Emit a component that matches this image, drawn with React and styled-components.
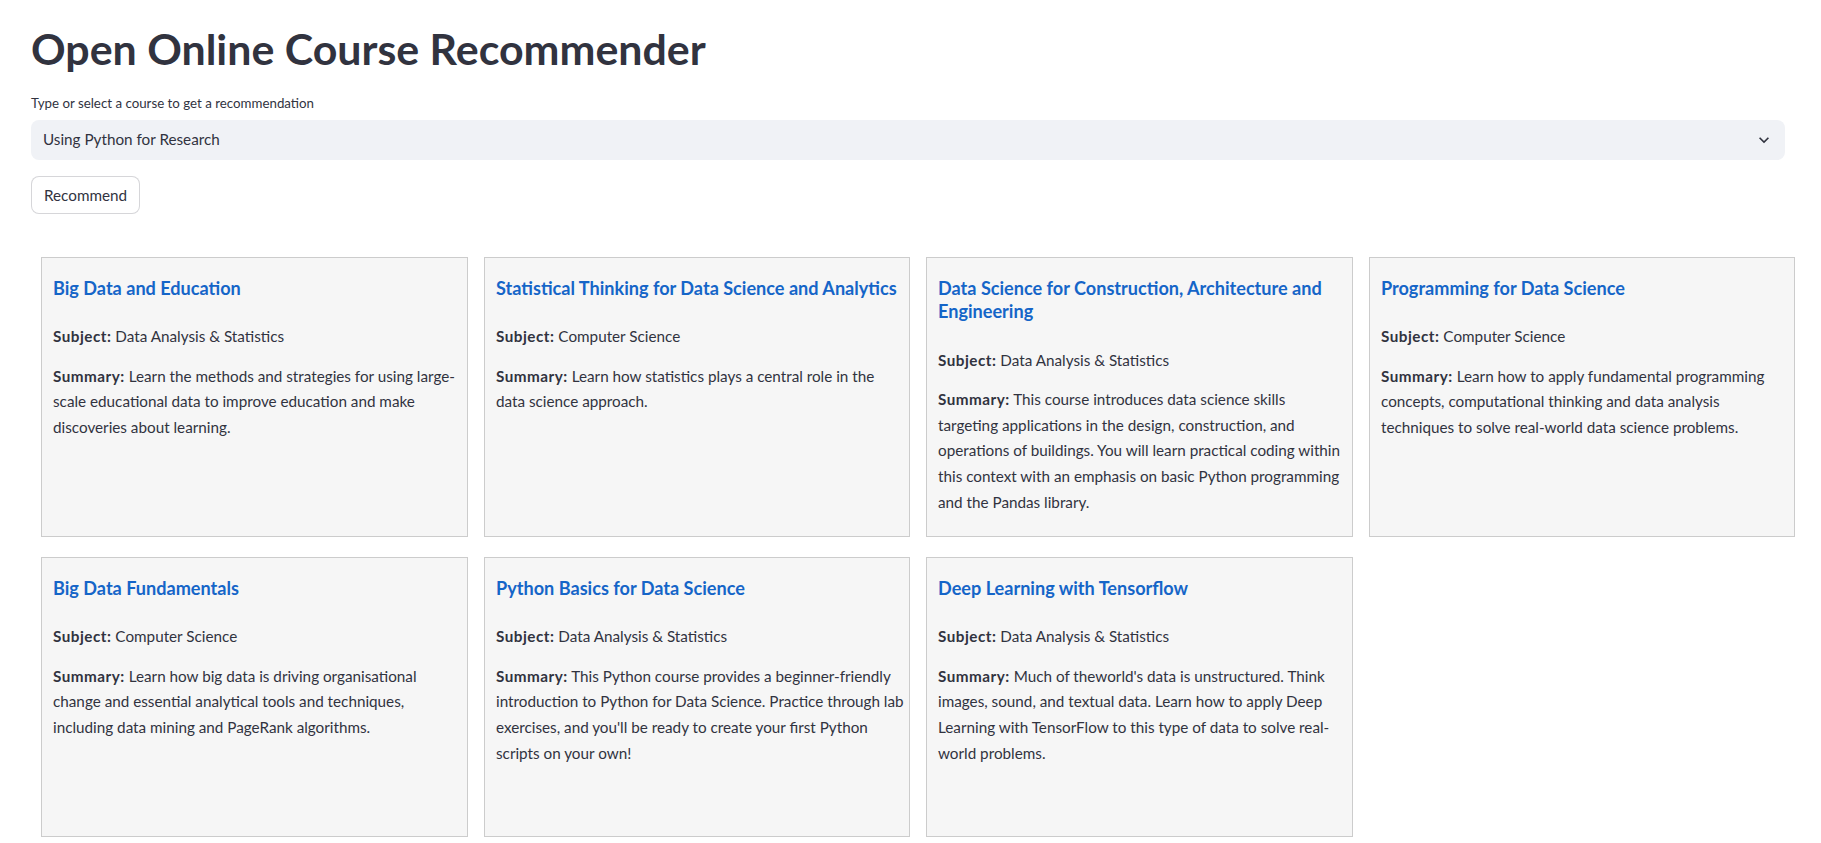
import React from "react";
import styled, { createGlobalStyle } from "styled-components";

const GlobalStyle = createGlobalStyle`
  * { box-sizing: border-box; }
  html, body { margin: 0; padding: 0; background: #ffffff; }
  body {
    font-family: "Lato", "Noto Sans", sans-serif;
    color: #31333f;
    -webkit-font-smoothing: antialiased;
  }
`;

const Page = styled.main`
  padding: 22px 36px 0 31px;
  display: flex;
  flex-direction: column;
`;

const Title = styled.h1`
  margin: 0;
  font-size: 42.9px;
  line-height: 53px;
  font-weight: 700;
  color: #31333f;
`;

const Field = styled.div`
  margin-top: 18px;
  display: flex;
  flex-direction: column;
  gap: 6px;
`;

const Label = styled.label`
  font-size: 13.3px;
  line-height: 21px;
  color: #31333f;
`;

const Select = styled.div`
  height: 40px;
  background: #f0f2f6;
  border-radius: 8px;
  display: flex;
  align-items: center;
  justify-content: space-between;
  padding: 0 12px;
  font-size: 15.25px;
  line-height: 25.6px;
  color: #31333f;
`;

const Chevron = styled.svg`
  width: 20px;
  height: 20px;
  fill: #31333f;
  margin-right: -1px;
`;

const Button = styled.button`
  margin-top: 16px;
  align-self: flex-start;
  height: 38px;
  padding: 0 12px;
  background: #ffffff;
  border: 1px solid rgba(49, 51, 63, 0.2);
  border-radius: 8px;
  font-family: inherit;
  font-size: 15.25px;
  color: #31333f;
  cursor: pointer;
`;

const Grid = styled.section`
  margin: 43px 0 0 10px;
  display: grid;
  grid-template-columns: 427px 426px 427px 426px;
  column-gap: 16px;
  row-gap: 20px;
`;

const Card = styled.article`
  height: 280px;
  background: #f6f6f6;
  border: 1px solid #cccccc;
  padding: 19px 4px 10px 11px;
  overflow: hidden;
`;

const CardTitle = styled.h3`
  margin: 0 0 24px 0;
  font-size: 18.1px;
  line-height: 23.3px;
  font-weight: 700;
  color: #1565c8;
`;

const Para = styled.p`
  margin: 0 0 ${(p) => (p.$last ? 0 : 14)}px 0;
  font-size: 15.25px;
  line-height: 25.6px;
  color: #31333f;
`;

const Strong = styled.strong`
  font-weight: 700;
  letter-spacing: 0.5px;
`;

const courses = [
  {
    title: "Big Data and Education",
    subject: "Data Analysis & Statistics",
    summary:
      "Learn the methods and strategies for using large-scale educational data to improve education and make discoveries about learning.",
  },
  {
    title: "Statistical Thinking for Data Science and Analytics",
    subject: "Computer Science",
    summary: "Learn how statistics plays a central role in the data science approach.",
  },
  {
    title: "Data Science for Construction, Architecture and Engineering",
    subject: "Data Analysis & Statistics",
    summary:
      "This course introduces data science skills targeting applications in the design, construction, and operations of buildings. You will learn practical coding within this context with an emphasis on basic Python programming and the Pandas library.",
  },
  {
    title: "Programming for Data Science",
    subject: "Computer Science",
    summary:
      "Learn how to apply fundamental programming concepts, computational thinking and data analysis techniques to solve real-world data science problems.",
  },
  {
    title: "Big Data Fundamentals",
    subject: "Computer Science",
    summary:
      "Learn how big data is driving organisational change and essential analytical tools and techniques, including data mining and PageRank algorithms.",
  },
  {
    title: "Python Basics for Data Science",
    subject: "Data Analysis & Statistics",
    summary:
      "This Python course provides a beginner-friendly introduction to Python for Data Science. Practice through lab exercises, and you'll be ready to create your first Python scripts on your own!",
  },
  {
    title: "Deep Learning with Tensorflow",
    subject: "Data Analysis & Statistics",
    summary:
      "Much of theworld's data is unstructured. Think images, sound, and textual data. Learn how to apply Deep Learning with TensorFlow to this type of data to solve real-world problems.",
  },
];

export default function App() {
  return (
    <>
      <GlobalStyle />
      <Page>
        <Title>Open Online Course Recommender</Title>
        <Field>
          <Label>Type or select a course to get a recommendation</Label>
          <Select>
            <span>Using Python for Research</span>
            <Chevron viewBox="0 0 24 24" aria-hidden="true">
              <path d="M16.59 8.59L12 13.17 7.41 8.59 6 10l6 6 6-6z" />
            </Chevron>
          </Select>
        </Field>
        <Button type="button">Recommend</Button>
        <Grid>
          {courses.map((c) => (
            <Card key={c.title}>
              <CardTitle>{c.title}</CardTitle>
              <Para>
                <Strong>Subject:</Strong> {c.subject}
              </Para>
              <Para $last>
                <Strong>Summary:</Strong> {c.summary}
              </Para>
            </Card>
          ))}
        </Grid>
      </Page>
    </>
  );
}
